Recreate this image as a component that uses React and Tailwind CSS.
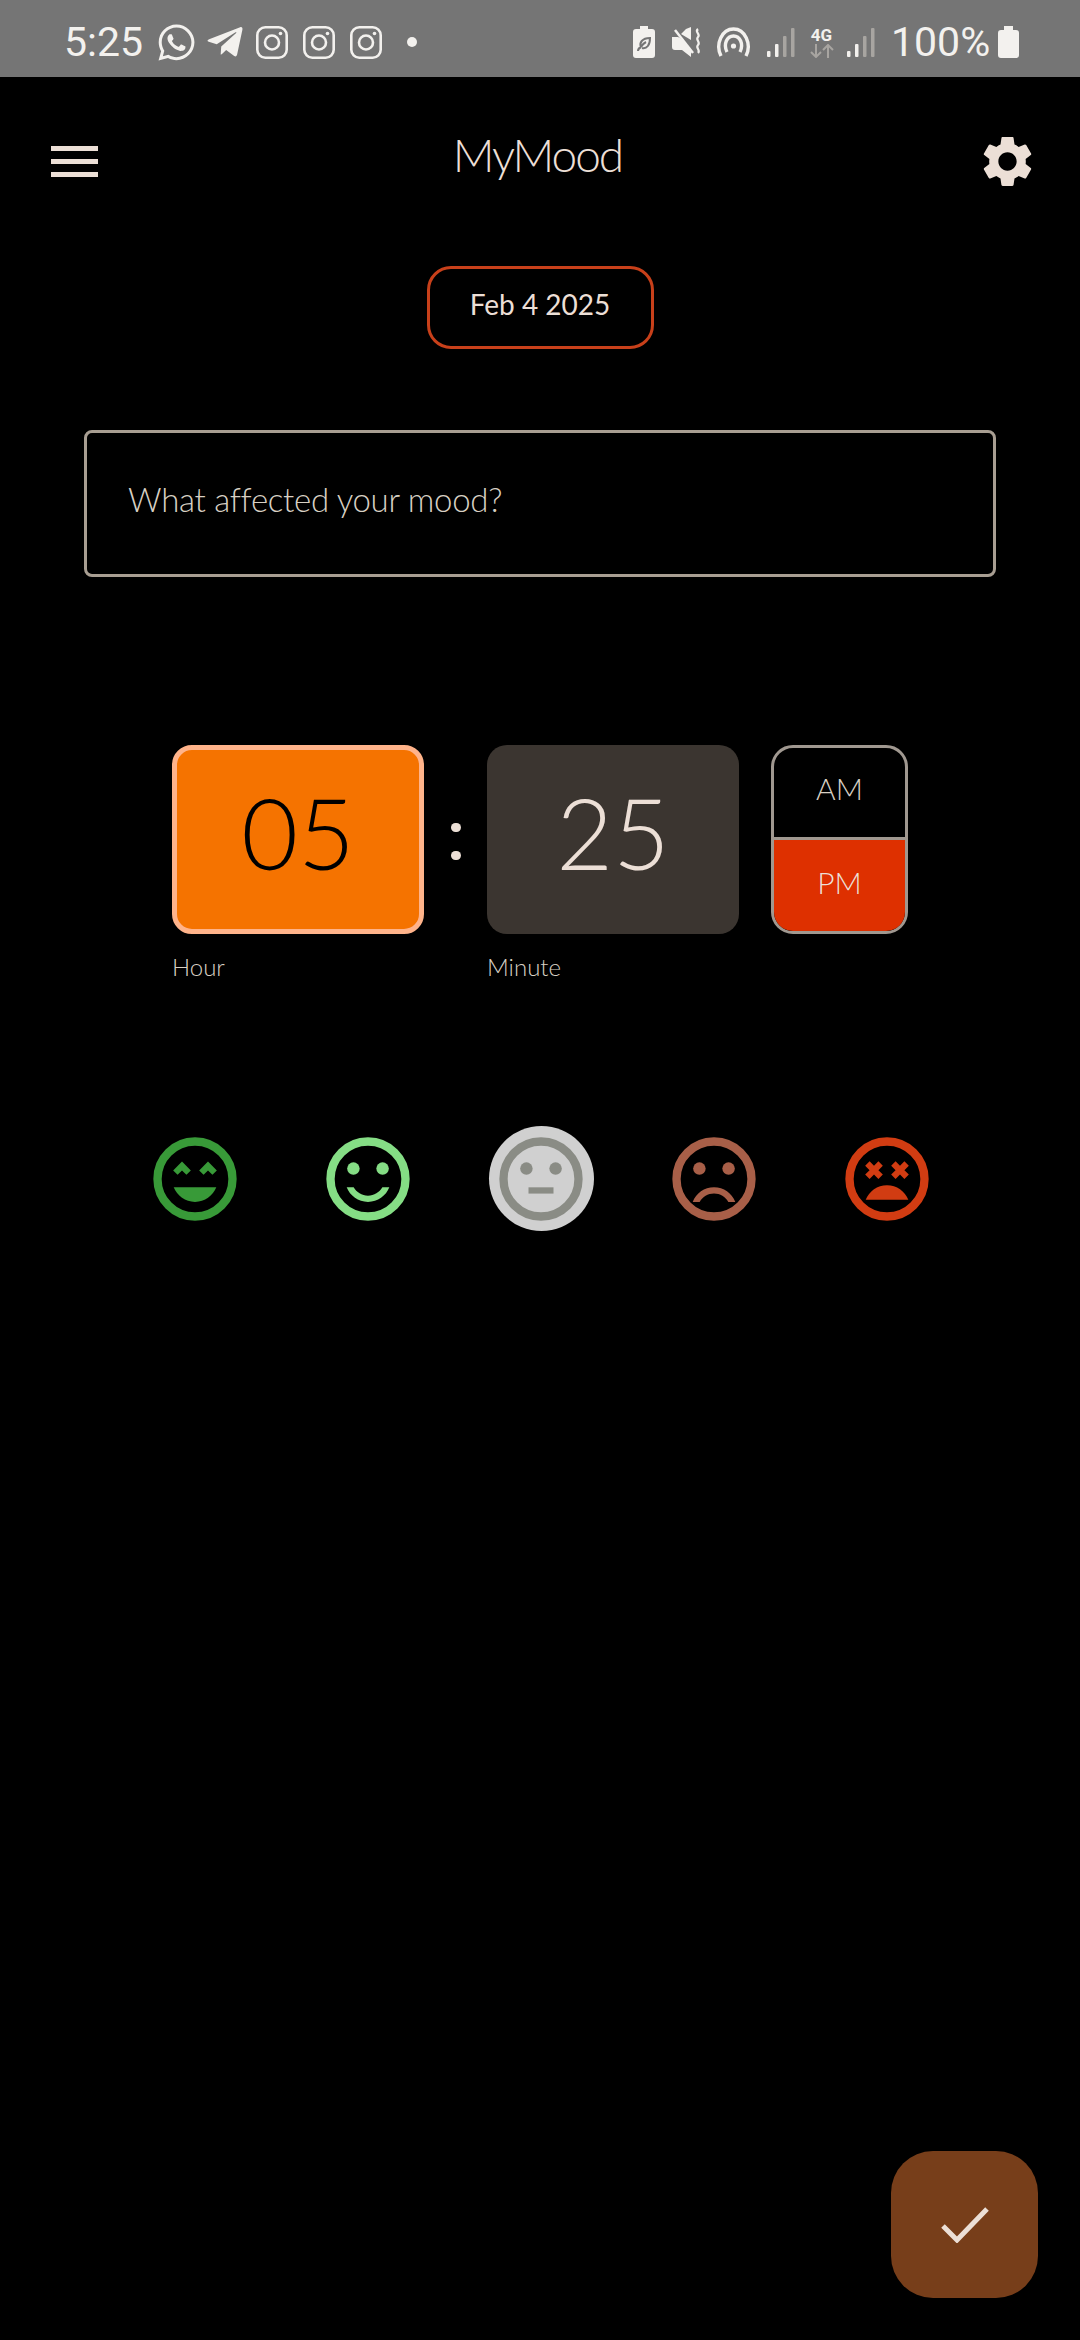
import { FaWhatsapp, FaTelegramPlane } from 'react-icons/fa'

const GEAR =
  'M19.14 12.94c.04-.3.06-.61.06-.94 0-.32-.02-.64-.07-.94l2.03-1.58c.18-.14.23-.41.12-.61l-1.92-3.32c-.12-.22-.37-.29-.59-.22l-2.39.96c-.5-.38-1.03-.7-1.62-.94l-.36-2.54c-.04-.24-.24-.41-.48-.41h-3.84c-.24 0-.43.17-.47.41l-.36 2.54c-.59.24-1.13.57-1.62.94l-2.39-.96c-.22-.08-.47 0-.59.22L2.74 8.87c-.12.21-.08.47.12.61l2.03 1.58c-.05.3-.09.63-.09.94s.02.64.07.94l-2.03 1.58c-.18.14-.23.41-.12.61l1.92 3.32c.12.22.37.29.59.22l2.39-.96c.5.38 1.03.7 1.62.94l.36 2.54c.05.24.24.41.48.41h3.84c.24 0 .44-.17.47-.41l.36-2.54c.59-.24 1.13-.56 1.62-.94l2.39.96c.22.08.47 0 .59-.22l1.92-3.32c.12-.22.07-.47-.12-.61l-2.01-1.58zM12 15.6c-1.98 0-3.6-1.62-3.6-3.6s1.62-3.6 3.6-3.6 3.6 1.62 3.6 3.6-1.62 3.6-3.6 3.6z'

function Insta() {
  return (
    <svg width="32" height="33" viewBox="0 0 32 33" fill="none" stroke="#f3f1ee" strokeWidth="2.6">
      <rect x="1.3" y="1.3" width="29.4" height="30.4" rx="8" />
      <circle cx="16" cy="16.5" r="7" />
      <circle cx="24.5" cy="7.5" r="1.8" fill="#f3f1ee" stroke="none" />
    </svg>
  )
}

function Signal() {
  return (
    <svg width="28" height="29" viewBox="0 0 28 29">
      <rect x="0" y="23" width="3.5" height="6" rx="1" fill="#f3f1ee" />
      <rect x="8" y="16" width="3.5" height="13" rx="1" fill="#f3f1ee" />
      <rect x="16" y="8" width="3.5" height="21" rx="1" fill="#a8a5a1" />
      <rect x="24" y="0" width="3.5" height="29" rx="1" fill="#a8a5a1" />
    </svg>
  )
}

function StatusBar() {
  return (
    <div className="h-[77px] pt-[7px] bg-[#757575] flex items-center text-[#f3f1ee] text-[41px] font-['Roboto',sans-serif]">
      <span className="ml-[64px] w-[92px] leading-none">5:25</span>
      <FaWhatsapp size={41} />
      <FaTelegramPlane size={40} className="ml-[8px]" />
      <div className="ml-[11px] flex gap-[15px]">
        <Insta />
        <Insta />
        <Insta />
      </div>
      <span className="ml-[25px] w-[10px] h-[10px] rounded-full bg-[#f3f1ee]" />

      {/* right side */}
      <svg className="ml-[216px]" width="22" height="32" viewBox="0 0 22 32">
        <path d="M7 0h8v3h4a3 3 0 0 1 3 3v23a3 3 0 0 1-3 3H3a3 3 0 0 1-3-3V6a3 3 0 0 1 3-3h4z" fill="#f3f1ee" />
        <path d="M5 25c0-2 1-3 3-4 M8 21c-2-4 1-9 9-9 0 7-3 11-8 10 M8 21c1-2 3-4 5-5" fill="none" stroke="#757575" strokeWidth="2" />
      </svg>
      <svg className="ml-[17px]" width="30" height="31" viewBox="0 0 30 31">
        <path d="M0 10h6l2 1 11 11v8l-9-7H3a3 3 0 0 1-3-3z M9 7l5-5 5-2v13z" fill="#f3f1ee" />
        <path d="M2 1l19 23" stroke="#757575" strokeWidth="2" />
        <path d="M3 3l18 23" stroke="#f3f1ee" strokeWidth="2.5" />
        <path d="M26 2c-4 3 3 5 0 8s3 5 0 8 3 5 0 8" fill="none" stroke="#f3f1ee" strokeWidth="2.2" />
      </svg>
      <svg className="ml-[14px]" width="35" height="31" viewBox="0 0 35 31" fill="none" stroke="#f3f1ee" strokeWidth="3.4">
        <path d="M5 29C-1 17 6 2 17.500 2S36 17 30 29" />
        <path d="M11 25C7 17 11 9 17.500 9S28 17 24 25" />
        <circle cx="17.500" cy="19" r="2.600" fill="#f3f1ee" stroke="none" />
      </svg>
      <div className="ml-[16px]"><Signal /></div>
      <div className="ml-[14px] w-[25px] flex flex-col items-center">
        <span className="text-[17px] leading-[17px] font-bold">4G</span>
        <svg width="24" height="14" viewBox="0 0 24 14" fill="none" stroke="#a8a5a1" strokeWidth="2">
          <path d="M6 0v13M1 8l5 5 5-5M18 14V1M13 6l5-5 5 5" />
        </svg>
      </div>
      <div className="ml-[13px]"><Signal /></div>
      <span className="ml-[16px] w-[105px] leading-none">100%</span>
      <svg className="ml-[2px]" width="21" height="32" viewBox="0 0 21 32">
        <path d="M6 0h9v4h3a3 3 0 0 1 3 3v22a3 3 0 0 1-3 3H3a3 3 0 0 1-3-3V7a3 3 0 0 1 3-3h3z" fill="#f3f1ee" />
      </svg>
    </div>
  )
}

function MoodIcon({ color, children }) {
  return (
    <svg width="100" height="100" viewBox="0 0 24 24" fill={color}>
      <circle cx="12" cy="12" r="9" fill="none" stroke={color} strokeWidth="2" />
      {children}
    </svg>
  )
}

const eyes = (
  <>
    <circle cx="8.5" cy="9.5" r="1.5" />
    <circle cx="15.5" cy="9.5" r="1.5" />
  </>
)

export default function App() {
  return (
    <div className="relative w-[1080px] h-[2340px] bg-black overflow-hidden text-[#ecdfd6] font-['Lato',sans-serif]">
      <StatusBar />

      {/* Header */}
      <div className="mt-[54px] h-[61px] flex items-center justify-between pl-[51px] pr-[42px]">
        <div className="w-[47px] flex flex-col gap-[8px]">
          <div className="h-[5px] bg-[#ecdfd6]" />
          <div className="h-[5px] bg-[#ecdfd6]" />
          <div className="h-[5px] bg-[#ecdfd6]" />
        </div>
        <span className="text-[46px] font-light leading-none tracking-[-2px] -mt-[14px]">MyMood</span>
        <svg width="61" height="61" viewBox="0 0 24 24" fill="#ecdfd6">
          <path d={GEAR} />
        </svg>
      </div>

      {/* Date */}
      <div className="mt-[74px] flex justify-center">
        <button className="w-[227px] h-[83px] rounded-[24px] border-[3px] border-[#c8401a] text-[28px] text-[#ecdfd6] pb-[7px]">
          Feb 4 2025
        </button>
      </div>

      {/* Note */}
      <div className="mt-[81px] mx-[84px] w-[912px] h-[147px] rounded-[8px] border-[3px] border-[#a89e92] flex items-center pl-[41px] pb-[7px] text-[33px] tracking-[-0.3px] font-light text-[#d8d0c4]">
        What affected your mood?
      </div>

      {/* Time picker */}
      <div className="mt-[168px] pl-[172px] flex items-start">
        <div className="w-[252px]">
          <div className="h-[189px] rounded-[20px] bg-[#f57300] border-[5px] border-[#ffb38a] flex items-center justify-center text-[98px] font-light text-black pb-[14px]">
            05
          </div>
          <div className="mt-[19px] text-[24px] leading-[28px] font-light text-[#d8d0c4]">Hour</div>
        </div>
        <div className="w-[63px] h-[189px] flex flex-col items-center justify-center gap-[19px] pt-[3px]">
          <span className="w-[10px] h-[9px] rounded-full bg-[#ecdfd6]" />
          <span className="w-[10px] h-[9px] rounded-full bg-[#ecdfd6]" />
        </div>
        <div className="w-[252px]">
          <div className="h-[189px] rounded-[20px] bg-[#3b3530] flex items-center justify-center text-[98px] font-light text-[#ecdfd6] pb-[14px]">
            25
          </div>
          <div className="mt-[19px] text-[24px] leading-[28px] font-light text-[#d8d0c4]">Minute</div>
        </div>
        <div className="ml-[32px] w-[137px] h-[189px] rounded-[22px] border-[3px] border-[#a09890] overflow-hidden flex flex-col text-[30px]">
          <div className="h-[92px] flex items-center justify-center font-light text-[#d8d0c4] border-b-[3px] border-[#a09890] pb-[8px]">AM</div>
          <div className="flex-1 flex items-center justify-center bg-[#de3000] font-light pb-[6px]">PM</div>
        </div>
      </div>

      {/* Moods */}
      <div className="mt-[145px] pl-[2px] flex justify-center">
        <div className="w-[173px] h-[105px] flex items-center justify-center">
          <MoodIcon color="#389a38">
            <path d="M8.88 9.94L9.94 11 11 9.94 8.88 7.82 6.76 9.94 7.82 11z" />
            <path d="M13 9.94L14.06 11l1.06-1.06L16.18 11l1.06-1.06-2.12-2.12z" />
            <path d="M12 17.5c2.33 0 4.31-1.46 5.11-3.5H6.89c.8 2.04 2.78 3.5 5.11 3.5z" />
          </MoodIcon>
        </div>
        <div className="w-[173px] h-[105px] flex items-center justify-center">
          <MoodIcon color="#85dd85">
            {eyes}
            <path d="M12 16c-1.48 0-2.75-.81-3.45-2H6.88c.8 2.05 2.79 3.5 5.12 3.5s4.32-1.45 5.12-3.5h-1.67c-.7 1.19-1.97 2-3.45 2z" />
          </MoodIcon>
        </div>
        <div className="w-[173px] h-[105px] flex items-center justify-center">
          <div className="w-[105px] h-[105px] rounded-full bg-[#d0d0d0] flex items-center justify-center">
            <MoodIcon color="#8a8c85">
              {eyes}
              <path d="M9 14h6v1.500H9z" />
            </MoodIcon>
          </div>
        </div>
        <div className="w-[173px] h-[105px] flex items-center justify-center">
          <MoodIcon color="#a85f48">
            {eyes}
            <path d="M12 14c-2.33 0-4.31 1.46-5.11 3.5h1.67c.69-1.19 1.97-2 3.44-2s2.75.81 3.44 2h1.67c-.8-2.04-2.78-3.5-5.11-3.5z" />
          </MoodIcon>
        </div>
        <div className="w-[173px] h-[105px] flex items-center justify-center">
          <MoodIcon color="#d13c12">
            <path d="M7.82 12l1.06-1.06L9.94 12 11 10.94 9.94 9.88 11 8.82 9.94 7.76 8.88 8.82 7.82 7.76 6.76 8.82l1.06 1.06-1.06 1.06z" />
            <path d="M14.06 12l1.06-1.06L16.18 12l1.06-1.06-1.06-1.06 1.06-1.06-1.06-1.06-1.06 1.06-1.06-1.06L13 8.82l1.06 1.06L13 10.94z" />
            <path d="M12 13.5c-2.33 0-4.31 1.46-5.11 3.5h10.22c-.8-2.04-2.78-3.5-5.11-3.5z" />
          </MoodIcon>
        </div>
      </div>

      {/* Save button */}
      <button className="absolute left-[891px] top-[2151px] w-[147px] h-[147px] rounded-[42px] bg-[#773e1a] flex items-center justify-center">
        <svg width="48" height="36" viewBox="0 0 48 36" fill="none" stroke="#ecdfd6" strokeWidth="5">
          <path d="M2 19l14 14L46 2" />
        </svg>
      </button>
    </div>
  )
}
